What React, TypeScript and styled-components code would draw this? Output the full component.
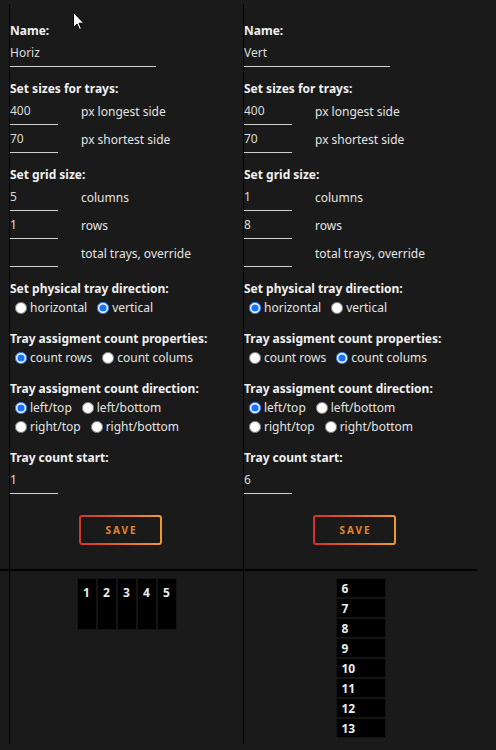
import React from "react";
import styled, { createGlobalStyle } from "styled-components";

const GlobalStyle = createGlobalStyle`
  html, body {
    margin: 0;
    padding: 0;
    background: #1a1a1a;
  }
  body {
    font-family: "Noto Sans", "Open Sans", sans-serif;
    font-size: 12px;
    color: #e4e4e4;
  }
`;

const Page = styled.div`
  position: relative;
  width: 496px;
  height: 750px;
  padding-top: 4px;
  box-sizing: border-box;
  background: #1a1a1a;
`;

const Columns = styled.div<{ $height: number }>`
  display: grid;
  grid-template-columns: 234px 234px;
  margin-left: 9px;
  height: ${(p) => p.$height}px;
`;

const Panel = styled.div`
  border-left: 1px solid #050505;
  box-sizing: border-box;
  min-width: 0;
`;

const FormPanel = styled(Panel)`
  padding-top: 19px;
  display: flex;
  flex-direction: column;
`;

const Divider = styled.div`
  width: 477px;
  height: 2px;
  background: #030303;
`;

const Section = styled.div`
  display: flex;
  flex-direction: column;
  & + & {
    margin-top: 14px;
  }
`;

const Title = styled.div`
  height: 16px;
  line-height: 16px;
  font-weight: 700;
  color: #f0f0f0;
  white-space: nowrap;
`;

const FieldRow = styled.div`
  display: flex;
  align-items: center;
  height: 28px;
`;

const TextInput = styled.input<{ $width: number }>`
  width: ${(p) => p.$width}px;
  height: 28px;
  box-sizing: border-box;
  border: none;
  border-bottom: 1px solid #cfcfcf;
  background: transparent;
  color: #dcdcdc;
  font-family: inherit;
  font-size: 12px;
  padding: 0 0 1px 0;
  outline: none;
`;

const Unit = styled.span`
  margin-left: 23px;
  color: #e4e4e4;
  white-space: nowrap;
`;

const RadioGroup = styled.div`
  display: flex;
  flex-direction: column;
  padding-top: 1px;
`;

const RadioRow = styled.div`
  display: flex;
  align-items: center;
  height: 19px;
  white-space: nowrap;
`;

const RadioOption = styled.label`
  display: inline-flex;
  align-items: center;
  margin-right: 5px;
  color: #e4e4e4;
`;

const Radio = styled.input.attrs({ type: "radio" })`
  width: 12px;
  height: 12px;
  margin: 0 3px 0 5px;
  accent-color: #1a73ff;
`;

const SaveButton = styled.button`
  margin: 21px 0 0 69px;
  width: 83px;
  height: 30px;
  box-sizing: border-box;
  border: 2px solid transparent;
  border-radius: 3px;
  background: linear-gradient(#1a1a1a, #1a1a1a) padding-box,
    linear-gradient(90deg, #d4322c, #e86a2a 55%, #f09a2c) border-box;
  color: #e8862c;
  font-family: inherit;
  font-weight: 700;
  font-size: 10px;
  letter-spacing: 2px;
  padding: 0 0 0 2px;
  cursor: pointer;
`;

const PreviewPanel = styled(Panel)`
  display: flex;
  justify-content: center;
  align-items: flex-start;
  padding-top: 7px;
`;

const TrayStack = styled.div<{ $vertical: boolean }>`
  display: flex;
  flex-direction: ${(p) => (p.$vertical ? "row" : "column")};
`;

const Tray = styled.div<{ $vertical: boolean }>`
  box-sizing: border-box;
  width: ${(p) => (p.$vertical ? 20 : 50)}px;
  height: ${(p) => (p.$vertical ? 52 : 20)}px;
  border: 1px solid #141414;
  background: #000;
  color: #ececec;
  font-weight: 700;
  font-size: 12px;
  display: flex;
  ${(p) =>
    p.$vertical
      ? "justify-content: center; align-items: flex-start; padding-top: 5px;"
      : "justify-content: flex-start; align-items: center; padding-left: 5px;"}
`;

const Pointer = styled.svg`
  position: absolute;
  left: 73px;
  top: 12px;
`;

type Choice = { label: string; checked: boolean };

type TrayConfig = {
  id: string;
  name: string;
  longest: string;
  shortest: string;
  columns: string;
  rows: string;
  override: string;
  direction: Choice[];
  countBy: Choice[];
  countFrom: Choice[][];
  start: number;
  total: number;
  vertical: boolean;
};

const configs: TrayConfig[] = [
  {
    id: "a",
    name: "Horiz",
    longest: "400",
    shortest: "70",
    columns: "5",
    rows: "1",
    override: "",
    direction: [
      { label: "horizontal", checked: false },
      { label: "vertical", checked: true },
    ],
    countBy: [
      { label: "count rows", checked: true },
      { label: "count colums", checked: false },
    ],
    countFrom: [
      [
        { label: "left/top", checked: true },
        { label: "left/bottom", checked: false },
      ],
      [
        { label: "right/top", checked: false },
        { label: "right/bottom", checked: false },
      ],
    ],
    start: 1,
    total: 5,
    vertical: true,
  },
  {
    id: "b",
    name: "Vert",
    longest: "400",
    shortest: "70",
    columns: "1",
    rows: "8",
    override: "",
    direction: [
      { label: "horizontal", checked: true },
      { label: "vertical", checked: false },
    ],
    countBy: [
      { label: "count rows", checked: false },
      { label: "count colums", checked: true },
    ],
    countFrom: [
      [
        { label: "left/top", checked: true },
        { label: "left/bottom", checked: false },
      ],
      [
        { label: "right/top", checked: false },
        { label: "right/bottom", checked: false },
      ],
    ],
    start: 6,
    total: 8,
    vertical: false,
  },
];

function Choices({ group, rows }: { group: string; rows: Choice[][] }) {
  return (
    <RadioGroup>
      {rows.map((row, i) => (
        <RadioRow key={i}>
          {row.map((c) => (
            <RadioOption key={c.label}>
              <Radio name={group} defaultChecked={c.checked} />
              {c.label}
            </RadioOption>
          ))}
        </RadioRow>
      ))}
    </RadioGroup>
  );
}

function NumberField({ value, unit }: { value: string; unit?: string }) {
  return (
    <FieldRow>
      <TextInput $width={48} defaultValue={value} />
      {unit && <Unit>{unit}</Unit>}
    </FieldRow>
  );
}

function TrayForm({ c }: { c: TrayConfig }) {
  return (
    <FormPanel>
      <Section>
        <Title>Name:</Title>
        <FieldRow>
          <TextInput $width={146} defaultValue={c.name} />
        </FieldRow>
      </Section>
      <Section>
        <Title>Set sizes for trays:</Title>
        <NumberField value={c.longest} unit="px longest side" />
        <NumberField value={c.shortest} unit="px shortest side" />
      </Section>
      <Section>
        <Title>Set grid size:</Title>
        <NumberField value={c.columns} unit="columns" />
        <NumberField value={c.rows} unit="rows" />
        <NumberField value={c.override} unit="total trays, override" />
      </Section>
      <Section>
        <Title>Set physical tray direction:</Title>
        <Choices group={`${c.id}-dir`} rows={[c.direction]} />
      </Section>
      <Section>
        <Title>Tray assigment count properties:</Title>
        <Choices group={`${c.id}-by`} rows={[c.countBy]} />
      </Section>
      <Section>
        <Title>Tray assigment count direction:</Title>
        <Choices group={`${c.id}-from`} rows={c.countFrom} />
      </Section>
      <Section>
        <Title>Tray count start:</Title>
        <NumberField value={String(c.start)} />
      </Section>
      <div>
        <SaveButton>SAVE</SaveButton>
      </div>
    </FormPanel>
  );
}

function TrayPreview({ c }: { c: TrayConfig }) {
  const numbers = Array.from({ length: c.total }, (_, i) => c.start + i);
  return (
    <PreviewPanel>
      <TrayStack $vertical={c.vertical}>
        {numbers.map((n) => (
          <Tray key={n} $vertical={c.vertical}>
            {n}
          </Tray>
        ))}
      </TrayStack>
    </PreviewPanel>
  );
}

export default function App() {
  return (
    <Page>
      <GlobalStyle />
      <Columns $height={565}>
        {configs.map((c) => (
          <TrayForm key={c.id} c={c} />
        ))}
      </Columns>
      <Divider />
      <Columns $height={173}>
        {configs.map((c) => (
          <TrayPreview key={c.id} c={c} />
        ))}
      </Columns>
      <Pointer width="12" height="19" viewBox="0 0 12 19">
        <path
          d="M0.5 0.5 L0.5 15.5 L4 12 L6.5 17.5 L8.5 16.6 L6 11.2 L10.8 11.2 Z"
          fill="#ffffff"
          stroke="#000000"
          strokeWidth="1"
          strokeLinejoin="round"
        />
      </Pointer>
    </Page>
  );
}
